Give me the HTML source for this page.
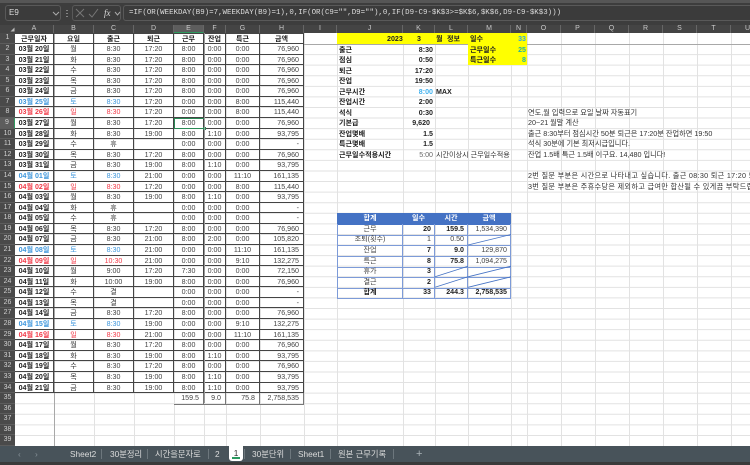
<!DOCTYPE html>
<html lang="ko"><head><meta charset="utf-8"><style>
html,body{margin:0;padding:0;background:#fff}
#p{position:relative;width:750px;height:465px;overflow:hidden;background:#fff;font:7.100px/10px "Liberation Sans","Noto Sans CJK KR",sans-serif;color:#333;filter:blur(.3px)}
#p *{box-sizing:border-box}
.a{position:absolute;white-space:nowrap}
.top{left:0;top:0;width:750px;height:33px;background:#3d3d3d}
.box{height:16px;top:5px;border:1px solid #595959;border-radius:3px;background:#3b3b3b}
.ch{left:0;top:25px;width:750px;height:8px;background:#444}
.ch b{position:absolute;top:0;height:8px;font:normal 7px/8px "Liberation Sans",sans-serif;color:#c8c8c8;text-align:center;border-right:1px solid #666}
.rh{left:0;top:33px;width:15px}
.rh div{height:10.58px;background:#4a4a4a;color:#cfcfcf;font-size:7px;line-height:10.58px;text-align:center;border-bottom:1px solid #5c5c5c}
.rh div:first-child{height:11px}
#t{left:15px;top:33px;width:289px;color:#444}
.r{display:grid;grid-template-columns:39px 40px 40px 40px 30px 22px 34px 44px;height:10.58px}
.r:first-child{height:11px;font-weight:bold;color:#222}
.r span{border-right:1px solid #444;border-bottom:1px solid #444;text-align:center;line-height:11px;overflow:hidden;white-space:nowrap}
.r span:first-child{font-weight:bold;color:#222}
.r span:nth-child(2){color:#333}
.r span:last-child{text-align:right;padding-right:4px}
.r:first-child span:last-child{text-align:center;padding:0}
.r:first-child span{border-top:1px solid #444}
.u span:nth-child(-n+3){color:#3f97dc}
.d span:nth-child(-n+3){color:#f23a48}
.tot{display:grid;grid-template-columns:39px 40px 40px 40px 30px 22px 34px 44px;height:10.58px}
.tot span{text-align:right;padding-right:4px;line-height:11px;color:#444}
.tot span:nth-child(n+5){border-right:1px solid #777;border-bottom:1px solid #777}
.y{background:#ffff00}
.k{font-weight:bold;color:#222}
.n{font-size:7.200px}
.w{letter-spacing:.3px}
#s{left:337px;top:213.28px;width:174px;color:#444}
.q{display:grid;grid-template-columns:66px 32px 33px 43px;height:10.58px}
.q span{border-right:1px solid #7d9bd8;border-bottom:1px solid #7d9bd8;line-height:11px;text-align:right;padding-right:3px;white-space:nowrap}
.q span:first-child{border-left:1px solid #7d9bd8;text-align:center;padding:0}
.q.h span{background:#4472c4;color:#fff;text-align:center;padding:0;font-weight:bold;border-color:#4472c4}
.tabs{left:0;top:446px;width:750px;height:19px;background:#48535a;color:#dcdcdc;font-size:8.300px;line-height:16px}
.tabs i{position:absolute;top:3px;width:1px;height:10px;background:#6d777d}
.tabs span{position:absolute;top:0}
</style></head><body><div id="p">
<div class="a top"></div>
<div class="a" style="left:0;top:0;width:750px;height:3px;background:#565656"></div>
<div class="a box" style="left:5px;width:56px"></div>
<div class="a" style="left:9px;top:8px;font-size:8px;color:#ddd">E9</div>
<svg class="a" style="left:0;top:0" width="130" height="25" fill="none" stroke="#aaa" stroke-width="1"><path d="M53 12l3 3 3-3"/><path d="M67 10v1M67 13v1M67 16v1" stroke="#ccc"/></svg>
<div class="a box" style="left:72px;width:49px"></div>
<svg class="a" style="left:0;top:0" width="130" height="25" fill="none" stroke-width="1"><path d="M76 9l8 8M84 9l-8 8M89 14l3 3 6-8" stroke="#777"/><path d="M115 12l2.500 3 2.500-3" stroke="#aaa"/></svg>
<div class="a" style="left:104px;top:7px;font:italic 9px/12px 'Liberation Serif',serif;color:#ddd">fx</div>
<div class="a box" style="left:123px;width:640px"></div>
<div class="a" style="left:129px;top:8px;font:7.430px/10px 'Liberation Mono',monospace;color:#ddd">=IF(OR(WEEKDAY(B9)=7,WEEKDAY(B9)=1),0,IF(OR(C9="",D9=""),0,IF(D9-C9-$K$3&gt;=$K$6,$K$6,D9-C9-$K$3)))</div>

<div class="a ch">
<svg class="a" style="left:10px;top:2px" width="5" height="5"><path d="M4.500 0.500V4.500H0.500Z" fill="#bbb"/></svg>
<b style="left:15px;width:39px">A</b><b style="left:54px;width:40px">B</b><b style="left:94px;width:40px">C</b><b style="left:134px;width:40px">D</b><b style="left:174px;width:30px;background:#5d5d5d;border-bottom:1px solid #2e9a5e">E</b><b style="left:204px;width:22px">F</b><b style="left:226px;width:34px">G</b><b style="left:260px;width:44px">H</b><b style="left:304px;width:33px">I</b><b style="left:337px;width:66px">J</b><b style="left:403px;width:32px">K</b><b style="left:435px;width:33px">L</b><b style="left:468px;width:43px">M</b><b style="left:511px;width:16px">N</b><b style="left:527px;width:34px">O</b><b style="left:561px;width:34px">P</b><b style="left:595px;width:34px">Q</b><b style="left:629px;width:34px">R</b><b style="left:663px;width:34px">S</b><b style="left:697px;width:34px">T</b><b style="left:731px;width:34px">U</b>
</div>

<div class="a rh">
<div>1</div><div>2</div><div>3</div><div>4</div><div>5</div><div>6</div><div>7</div><div>8</div><div style="background:#5d5d5d;border-right:1px solid #2e9a5e">9</div><div>10</div><div>11</div><div>12</div><div>13</div><div>14</div><div>15</div><div>16</div><div>17</div><div>18</div><div>19</div><div>20</div><div>21</div><div>22</div><div>23</div><div>24</div><div>25</div><div>26</div><div>27</div><div>28</div><div>29</div><div>30</div><div>31</div><div>32</div><div>33</div><div>34</div><div>35</div><div>36</div><div>37</div><div>38</div><div>39</div>
</div>

<svg class="a" style="left:0;top:0" width="750" height="446" fill="none" stroke="#e2e2e2" stroke-width="1"><path d="M15 54.580H750M15 65.160H750M15 75.740H750M15 86.320H750M15 96.900H750M15 107.480H750M15 118.060H750M15 128.640H750M15 139.220H750M15 149.800H750M15 160.380H750M15 170.960H750M15 181.540H750M15 192.120H750M15 202.700H750M15 213.280H750M15 223.860H750M15 234.440H750M15 245.020H750M15 255.600H750M15 266.180H750M15 276.760H750M15 287.340H750M15 297.920H750M15 308.500H750M15 319.080H750M15 329.660H750M15 340.240H750M15 350.820H750M15 361.400H750M15 371.980H750M15 382.560H750M15 393.140H750M15 403.720H750M15 414.300H750M15 424.880H750M15 435.460H750"/><path d="M94.500 33V446M134.500 33V446M174.500 33V446M204.500 33V446M226.500 33V446M260.500 33V446M304.500 33V446M337.500 33V446M403.500 33V446M435.500 33V446M468.500 33V446M511.500 33V446M527.500 33V446M561.500 33V446M595.500 33V446M629.500 33V446M663.500 33V446M697.500 33V446M731.500 33V446"/><path d="M304 44.500H750" stroke="#a8a8a8"/><path d="M54.500 33V446" stroke="#a8a8a8"/></svg>

<div class="a" id="t">
<div class="r"><span>근무일자</span><span>요일</span><span>출근</span><span>퇴근</span><span>근무</span><span>잔업</span><span>특근</span><span>금액</span></div>
<div class="r"><span>03월 20일</span><span>월</span><span>8:30</span><span>17:20</span><span>8:00</span><span>0:00</span><span>0:00</span><span>76,960</span></div>
<div class="r"><span>03월 21일</span><span>화</span><span>8:30</span><span>17:20</span><span>8:00</span><span>0:00</span><span>0:00</span><span>76,960</span></div>
<div class="r"><span>03월 22일</span><span>수</span><span>8:30</span><span>17:20</span><span>8:00</span><span>0:00</span><span>0:00</span><span>76,960</span></div>
<div class="r"><span>03월 23일</span><span>목</span><span>8:30</span><span>17:20</span><span>8:00</span><span>0:00</span><span>0:00</span><span>76,960</span></div>
<div class="r"><span>03월 24일</span><span>금</span><span>8:30</span><span>17:20</span><span>8:00</span><span>0:00</span><span>0:00</span><span>76,960</span></div>
<div class="r u"><span style="color:#3f97dc">03월 25일</span><span>토</span><span>8:30</span><span>17:20</span><span>0:00</span><span>0:00</span><span>8:00</span><span>115,440</span></div>
<div class="r d"><span style="color:#f23a48">03월 26일</span><span>일</span><span>8:30</span><span>17:20</span><span>0:00</span><span>0:00</span><span>8:00</span><span>115,440</span></div>
<div class="r"><span>03월 27일</span><span>월</span><span>8:30</span><span>17:20</span><span>8:00</span><span>0:00</span><span>0:00</span><span>76,960</span></div>
<div class="r"><span>03월 28일</span><span>화</span><span>8:30</span><span>19:00</span><span>8:00</span><span>1:10</span><span>0:00</span><span>93,795</span></div>
<div class="r"><span>03월 29일</span><span>수</span><span>휴</span><span></span><span>0:00</span><span>0:00</span><span>0:00</span><span>-</span></div>
<div class="r"><span>03월 30일</span><span>목</span><span>8:30</span><span>17:20</span><span>8:00</span><span>0:00</span><span>0:00</span><span>76,960</span></div>
<div class="r"><span>03월 31일</span><span>금</span><span>8:30</span><span>19:00</span><span>8:00</span><span>1:10</span><span>0:00</span><span>93,795</span></div>
<div class="r u"><span style="color:#3f97dc">04월 01일</span><span>토</span><span>8:30</span><span>21:00</span><span>0:00</span><span>0:00</span><span>11:10</span><span>161,135</span></div>
<div class="r d"><span style="color:#f23a48">04월 02일</span><span>일</span><span>8:30</span><span>17:20</span><span>0:00</span><span>0:00</span><span>8:00</span><span>115,440</span></div>
<div class="r"><span>04월 03일</span><span>월</span><span>8:30</span><span>19:00</span><span>8:00</span><span>1:10</span><span>0:00</span><span>93,795</span></div>
<div class="r"><span>04월 04일</span><span>화</span><span>휴</span><span></span><span>0:00</span><span>0:00</span><span>0:00</span><span>-</span></div>
<div class="r"><span>04월 05일</span><span>수</span><span>휴</span><span></span><span>0:00</span><span>0:00</span><span>0:00</span><span>-</span></div>
<div class="r"><span>04월 06일</span><span>목</span><span>8:30</span><span>17:20</span><span>8:00</span><span>0:00</span><span>0:00</span><span>76,960</span></div>
<div class="r"><span>04월 07일</span><span>금</span><span>8:30</span><span>21:00</span><span>8:00</span><span>2:00</span><span>0:00</span><span>105,820</span></div>
<div class="r u"><span style="color:#3f97dc">04월 08일</span><span>토</span><span>8:30</span><span>21:00</span><span>0:00</span><span>0:00</span><span>11:10</span><span>161,135</span></div>
<div class="r d"><span style="color:#f23a48">04월 09일</span><span>일</span><span>10:30</span><span>21:00</span><span>0:00</span><span>0:00</span><span>9:10</span><span>132,275</span></div>
<div class="r"><span>04월 10일</span><span>월</span><span>9:00</span><span>17:20</span><span>7:30</span><span>0:00</span><span>0:00</span><span>72,150</span></div>
<div class="r"><span>04월 11일</span><span>화</span><span>10:00</span><span>19:00</span><span>8:00</span><span>0:00</span><span>0:00</span><span>76,960</span></div>
<div class="r"><span>04월 12일</span><span>수</span><span>결</span><span></span><span>0:00</span><span>0:00</span><span>0:00</span><span>-</span></div>
<div class="r"><span>04월 13일</span><span>목</span><span>결</span><span></span><span>0:00</span><span>0:00</span><span>0:00</span><span>-</span></div>
<div class="r"><span>04월 14일</span><span>금</span><span>8:30</span><span>17:20</span><span>8:00</span><span>0:00</span><span>0:00</span><span>76,960</span></div>
<div class="r u"><span style="color:#3f97dc">04월 15일</span><span>토</span><span>8:30</span><span>19:00</span><span>0:00</span><span>0:00</span><span>9:10</span><span>132,275</span></div>
<div class="r d"><span style="color:#f23a48">04월 16일</span><span>일</span><span>8:30</span><span>21:00</span><span>0:00</span><span>0:00</span><span>11:10</span><span>161,135</span></div>
<div class="r"><span>04월 17일</span><span>월</span><span>8:30</span><span>17:20</span><span>8:00</span><span>0:00</span><span>0:00</span><span>76,960</span></div>
<div class="r"><span>04월 18일</span><span>화</span><span>8:30</span><span>19:00</span><span>8:00</span><span>1:10</span><span>0:00</span><span>93,795</span></div>
<div class="r"><span>04월 19일</span><span>수</span><span>8:30</span><span>17:20</span><span>8:00</span><span>0:00</span><span>0:00</span><span>76,960</span></div>
<div class="r"><span>04월 20일</span><span>목</span><span>8:30</span><span>19:00</span><span>8:00</span><span>1:10</span><span>0:00</span><span>93,795</span></div>
<div class="r"><span>04월 21일</span><span>금</span><span>8:30</span><span>19:00</span><span>8:00</span><span>1:10</span><span>0:00</span><span>93,795</span></div>
<div class="tot"><span></span><span></span><span></span><span></span><span>159.5</span><span>9.0</span><span>75.8</span><span>2,758,535</span></div>
</div>
<div class="a" style="left:174px;top:117.500px;width:31px;height:11.500px;border:1.500px solid #2a8a55"></div>
<div class="a" style="left:202.500px;top:127px;width:3px;height:3px;background:#2a8a55"></div>
<div class="a" style="left:204px;top:33px;width:1px;height:370px;background:#999"></div>

<div class="a y" style="left:337px;top:33px;width:190px;height:11px"></div>
<div class="a y" style="left:468px;top:44px;width:59px;height:21px"></div>
<div class="a k" style="left:387px;top:34px">2023</div>
<div class="a k" style="left:417px;top:34px">3</div>
<div class="a k" style="left:436px;top:34px">월</div>
<div class="a k" style="left:447px;top:34px">정보</div>
<div class="a k" style="left:470px;top:34px">일수</div>
<div class="a k" style="right:224px;top:34px;color:#2fa9e0">33</div>
<div class="a k" style="left:470px;top:44.500px">근무일수</div>
<div class="a k" style="right:224px;top:44.500px;color:#22b5a0">25</div>
<div class="a k" style="left:470px;top:55px">특근일수</div>
<div class="a k" style="right:224px;top:55px;color:#22b5a0">8</div>

<div class="a k" style="left:339px;top:44.500px">출근</div><div class="a k" style="right:317px;top:44.500px">8:30</div>
<div class="a k" style="left:339px;top:55px">점심</div><div class="a k" style="right:317px;top:55px">0:50</div>
<div class="a k" style="left:339px;top:65.500px">퇴근</div><div class="a k" style="right:317px;top:65.500px">17:20</div>
<div class="a k" style="left:339px;top:76px">잔업</div><div class="a k" style="right:317px;top:76px">19:50</div>
<div class="a k" style="left:339px;top:86.500px">근무시간</div><div class="a k" style="right:317px;top:86.500px;color:#3fb0ee">8:00</div><div class="a k" style="left:436px;top:86.500px">MAX</div>
<div class="a k" style="left:339px;top:97px">잔업시간</div><div class="a k" style="right:317px;top:97px">2:00</div>
<div class="a k" style="left:339px;top:107.500px">석식</div><div class="a k" style="right:317px;top:107.500px">0:30</div>
<div class="a k" style="left:339px;top:118px">기본급</div><div class="a k" style="right:320px;top:118px">9,620</div>
<div class="a k" style="left:339px;top:128.500px">잔업몇배</div><div class="a k" style="right:317px;top:128.500px">1.5</div>
<div class="a k" style="left:339px;top:139px">특근몇배</div><div class="a k" style="right:317px;top:139px">1.5</div>
<div class="a k" style="left:339px;top:149.500px">근무일수적용시간</div><div class="a" style="right:317px;top:149.500px;color:#666">5:00</div><div class="a" style="left:436px;top:149.500px">시간이상시 근무일수적용</div>

<div class="a n" style="left:528px;top:107.500px">연도,월 입력으로 요일 날짜 자동표기</div>
<div class="a n" style="left:528px;top:118px">20~21 월말 계산</div>
<div class="a n" style="left:528px;top:128.500px">출근 8:30부터 점심시간 50분 퇴근은 17:20분 잔업하면 19:50</div>
<div class="a n" style="left:528px;top:139px">석식 30분에 기본 최저시급입니다.</div>
<div class="a n" style="left:528px;top:149.500px">잔업 1.5배 특근 1.5배 이구요. 14,480 입니다!</div>
<div class="a n w" style="left:528px;top:171px">2번 질문 부분은 시간으로 나타내고 싶습니다. 출근 08:30 퇴근 17:20 퇴근</div>
<div class="a n w" style="left:528px;top:181.500px">3번 질문 부분은 주휴수당은 제외하고 급여만 합산될 수 있게끔 부탁드립니다</div>

<div class="a" id="s">
<div class="q h"><span>합계</span><span>일수</span><span>시간</span><span>금액</span></div>
<div class="q"><span>근무</span><span class="k">20</span><span class="k">159.5</span><span>1,534,390</span></div>
<div class="q"><span>조퇴(횟수)</span><span>1</span><span>0.50</span><span></span></div>
<div class="q"><span>잔업</span><span class="k">7</span><span class="k">9.0</span><span>129,870</span></div>
<div class="q"><span>특근</span><span class="k">8</span><span class="k">75.8</span><span>1,094,275</span></div>
<div class="q"><span>휴가</span><span class="k">3</span><span></span><span></span></div>
<div class="q"><span>결근</span><span class="k">2</span><span></span><span></span></div>
<div class="q k"><span>합계</span><span>33</span><span>244.3</span><span>2,758,535</span></div>
</div>
<svg class="a" style="left:0;top:0" width="750" height="446" fill="none" stroke="#4472c4" stroke-width=".8"><path d="M468 245L511 234.500M435 276.800L468 266.200M468 276.800L511 266.200M435 287.300L468 276.800M468 287.300L511 276.800"/></svg>

<div class="a tabs">
<span style="left:18px;color:#88939a">‹</span><span style="left:35px;color:#88939a">›</span>
<span style="left:70px">Sheet2</span><i style="left:101px"></i>
<span style="left:110px">30분정리</span><i style="left:147px"></i>
<span style="left:155px">시간을문자로</span><i style="left:208px"></i>
<span style="left:215px">2</span>
<div class="a" style="left:229px;top:0;width:14px;height:15px;background:#fff;border-radius:0 0 3px 3px;color:#333;text-align:center;line-height:14px">1<div class="a" style="left:3px;top:11px;width:8px;height:1.500px;background:#2a9a60"></div></div>
<i style="left:244px"></i>
<span style="left:252px">30분단위</span><i style="left:290px"></i>
<span style="left:298px">Sheet1</span><i style="left:330px"></i>
<span style="left:338px">원본 근무기록</span><i style="left:393px"></i>
<span style="left:416px;font-size:11px;color:#aab2b7">+</span>
</div>
<div class="a" style="left:0;top:462px;width:750px;height:3px;background:#3a3a3a"></div>
</div></body></html>
